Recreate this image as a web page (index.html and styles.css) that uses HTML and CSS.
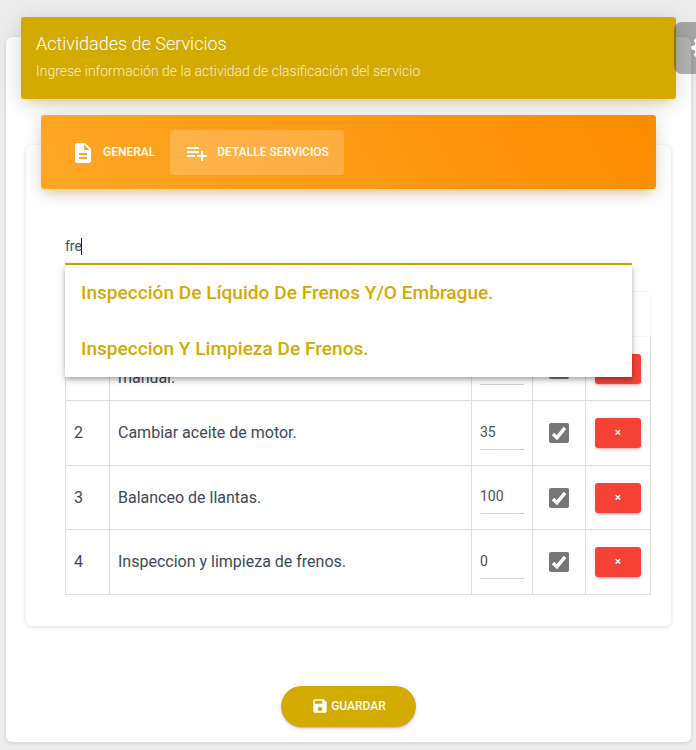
FILE: index.html
```html
<!DOCTYPE html>
<html lang="es">
<head>
<meta charset="utf-8">
<title>Actividades de Servicios</title>
<link rel="stylesheet" href="styles.css">
</head>
<body>
<main class="card">
  <header class="card-header">
    <h4 class="title">Actividades de Servicios</h4>
    <p class="category">Ingrese información de la actividad de clasificación del servicio</p>
  </header>
  <section class="inner-card">
    <nav class="tabs">
      <a class="tab"><svg class="icon" viewBox="0 0 24 24"><path d="M14 2H6c-1.100 0-1.990.9-1.990 2L4 20c0 1.100.89 2 1.990 2H18c1.100 0 2-.9 2-2V8l-6-6zm2 16H8v-2h8v2zm0-4H8v-2h8v2zm-3-5V3.500L18.500 9H13z"/></svg><span>GENERAL</span></a>
      <a class="tab active"><svg class="icon" viewBox="0 0 24 24"><path d="M14 10H2v2h12v-2zm0-4H2v2h12V6zm4 8v-4h-2v4h-4v2h4v4h2v-4h4v-2h-4zM2 16h8v-2H2v2z"/></svg><span>DETALLE SERVICIOS</span></a>
    </nav>
    <div class="search">
      <div class="search-input"><span>fre</span><i class="caret"></i></div>
      <ul class="options">
        <li>Inspección De Líquido De Frenos Y/O Embrague.</li>
        <li>Inspeccion Y Limpieza De Frenos.</li>
      </ul>
    </div>
    <table class="services">
      <colgroup><col class="c-num"><col class="c-name"><col class="c-qty"><col class="c-check"><col class="c-action"></colgroup>
      <thead><tr><th></th><th></th><th></th><th></th><th></th></tr></thead>
      <tbody>
        <tr><td></td><td class="two-lines"><br>manual.</td><td><div class="qty"></div></td><td><span class="check"><svg viewBox="0 0 20 20"><path d="M4 11l4 3.700L16 4.800"/></svg></span></td><td><button class="remove"></button></td></tr>
        <tr><td>2</td><td>Cambiar aceite de motor.</td><td><div class="qty">35</div></td><td><span class="check"><svg viewBox="0 0 20 20"><path d="M4 11l4 3.700L16 4.800"/></svg></span></td><td><button class="remove">×</button></td></tr>
        <tr><td>3</td><td>Balanceo de llantas.</td><td><div class="qty">100</div></td><td><span class="check"><svg viewBox="0 0 20 20"><path d="M4 11l4 3.700L16 4.800"/></svg></span></td><td><button class="remove">×</button></td></tr>
        <tr><td>4</td><td>Inspeccion y limpieza de frenos.</td><td><div class="qty">0</div></td><td><span class="check"><svg viewBox="0 0 20 20"><path d="M4 11l4 3.700L16 4.800"/></svg></span></td><td><button class="remove">×</button></td></tr>
      </tbody>
    </table>
  </section>
  <button class="save"><svg viewBox="0 0 24 24"><path d="M17 3H5c-1.110 0-2 .9-2 2v14c0 1.100.89 2 2 2h14c1.100 0 2-.9 2-2V7l-4-4zm-5 16c-1.660 0-3-1.340-3-3s1.340-3 3-3 3 1.340 3 3-1.340 3-3 3zm3-10H5V5h10v4z"/></svg><span>GUARDAR</span></button>
</main>
<aside class="settings"><svg viewBox="0 0 24 24"><path fill-rule="evenodd" d="M10 1h4l.5 3 2 .9L19 3l2.500 2.500L19.700 8l.8 2 3 .5v3.500l-3 .5-.8 2 1.800 2.500L19 21.500l-2.500-1.800-2 .8-.5 3h-4l-.5-3-2-.8L5 21.500 2.500 19l1.800-2.500-.8-2-3-.5v-3.500l3-.5.8-2L2.500 5.500 5 3l2.500 1.900 2-.9zM12 8a4 4 0 1 0 0 8 4 4 0 0 0 0-8z"/></svg></aside>
</body>
</html>
```
FILE: styles.css
```css
* { box-sizing: border-box; }
body {
  margin: 0;
  height: 750px;
  padding: 37px 5px 8px 6px;
  overflow: hidden;
  background: #ededed;
  font-family: Roboto, "Liberation Sans", sans-serif;
  color: #3c4858;
}
.card {
  height: 705px;
  padding: 0 15px;
  border-radius: 6px;
  background: #fff;
  box-shadow: 0 1px 4px rgba(0, 0, 0, .14);
  display: flex;
  flex-direction: column;
}
.card-header {
  height: 82px;
  flex: none;
  margin-top: -20px;
  padding: 14px 15px;
  border-radius: 3px;
  background: #d3aa00;
  color: #fff;
  box-shadow: 0 4px 25px rgba(0, 0, 0, .15), 0 7px 10px -5px rgba(211, 170, 0, .35);
}
.title { margin: 0; font-size: 18px; line-height: 25px; font-weight: 350; }
.category { margin: 5px 0 0; font-size: 14px; line-height: 21px; font-weight: 350; opacity: .8; }
.inner-card {
  display: flow-root;
  height: 481px;
  flex: none;
  margin: 46px 5px 0;
  padding: 0 15px;
  border-radius: 6px;
  box-shadow: 0 1px 4px rgba(0, 0, 0, .14);
}
.tabs {
  display: flex;
  height: 74px;
  margin-top: -30px;
  padding: 15px;
  border-radius: 3px;
  background: linear-gradient(60deg, #ffa726, #fb8c00);
  box-shadow: 0 4px 20px rgba(0, 0, 0, .14), 0 7px 10px -5px rgba(255, 152, 0, .4);
}
.tab {
  display: flex;
  align-items: center;
  height: 45px;
  padding: 0 15px 1px;
  border-radius: 3px;
  color: #fff;
  font-size: 12px;
  font-weight: 500;
}
.tab.active { background: rgba(255, 255, 255, .2); }
.icon { width: 24px; height: 24px; margin: 1px 8px 0 0; fill: #fff; }
.search { position: relative; width: 567px; height: 36px; margin: 40px 0 0 24px; }
.search-input {
  display: flex;
  align-items: center;
  height: 36px;
  border-bottom: 2px solid #d3aa00;
  color: #495057;
  font-size: 14px;
}
.caret { width: 1px; height: 17px; margin-left: -1px; background: #222; }
.options {
  position: absolute;
  z-index: 2;
  top: 36px;
  left: 0;
  width: 567px;
  margin: 0;
  padding: 0;
  list-style: none;
  background: #fff;
  box-shadow: 0 2px 4px -1px rgba(0, 0, 0, .2), 0 4px 5px rgba(0, 0, 0, .14), 0 1px 10px rgba(0, 0, 0, .12);
}
.options li { height: 56px; padding: 0 16px; line-height: 56px; font-size: 19.1px; font-weight: 500; color: #d3aa00; }
.services { width: 586px; margin: 26px 0 0 24px; border-collapse: collapse; table-layout: fixed; }
.c-num { width: 44px; }
.c-name { width: 362px; }
.c-qty { width: 61px; }
.c-check { width: 53px; }
.c-action { width: 65px; }
th { height: 45px; padding: 0; border: 1px solid #f6f6f6; }
td { height: 64px; padding: 0 8px; border: 1px solid #ddd; font-size: 16px; line-height: 24px; vertical-align: middle; }
tbody tr:nth-child(even) td { height: 65px; }
td.two-lines { line-height: 18px; }
.qty { height: 36px; margin-bottom: 3px; border-bottom: 1px solid #d2d2d2; color: #495057; font-size: 14px; line-height: 37px; }
.check { display: block; width: 20px; height: 20px; margin: 0 auto; border-radius: 2px; background: #767676; }
.check svg { display: block; fill: none; stroke: #fff; stroke-width: 3.5; }
.remove {
  display: block;
  width: 46px;
  height: 30px;
  margin: 0 0 0 1px;
  padding: 0;
  border: 0;
  border-radius: 3px;
  background: #f44336;
  color: #fff;
  font: 700 11px/28px Roboto, sans-serif;
  box-shadow: 0 2px 2px rgba(244, 67, 54, .14), 0 1px 5px rgba(244, 67, 54, .12), 0 3px 1px -2px rgba(244, 67, 54, .2);
}
.save {
  display: flex;
  align-items: center;
  justify-content: center;
  flex: none;
  align-self: center;
  width: 135px;
  height: 41px;
  margin-top: 60px;
  padding: 0 0 2px;
  border: 0;
  border-radius: 30px;
  background: #d3aa00;
  color: #fff;
  font: 500 12px Roboto, sans-serif;
  box-shadow: 0 2px 2px rgba(156, 39, 176, .14), 0 3px 1px -2px rgba(156, 39, 176, .2), 0 1px 5px rgba(156, 39, 176, .12);
}
.save svg { width: 18px; height: 18px; margin-right: 2px; fill: #fff; }
.settings {
  position: absolute;
  top: 22px;
  right: 0;
  width: 22px;
  height: 52px;
  padding: 13px 0 0 17px;
  overflow: hidden;
  border-radius: 8px 0 0 8px;
  background: rgba(0, 0, 0, .3);
}
.settings svg { display: block; width: 25px; height: 25px; fill: #fff; }
```
